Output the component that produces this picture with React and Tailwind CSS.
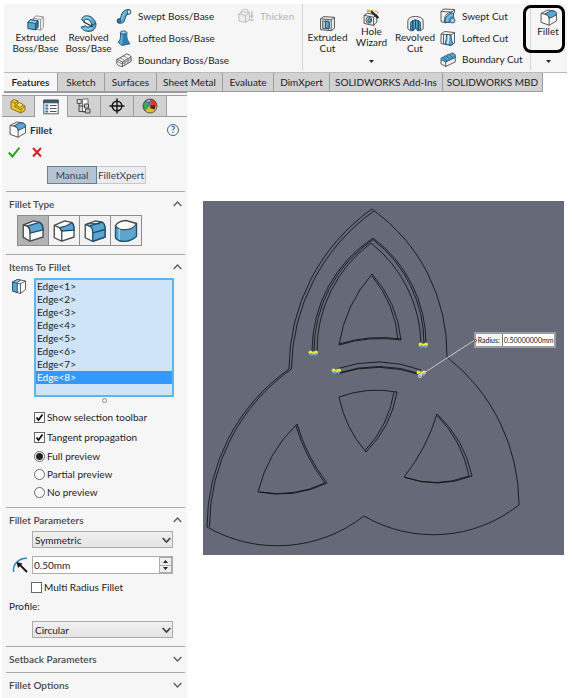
import { useState } from 'react';
import { cx } from 'class-variance-authority';

const INK = '#4a4d50';
const BLUE = '#5ba6cf';
const DEEP = '#2f7fae';
const PALE = '#9fd0ea';

function Icon({ size = 'h-4 w-4', children }) {
  return (
    <svg
      aria-hidden="true"
      className={cx('shrink-0', size)}
      fill="none"
      stroke={INK}
      strokeLinejoin="round"
      strokeWidth="0.9"
      viewBox="0 0 16 16"
    >
      {children}
    </svg>
  );
}

const ExtrudedBossIcon = () => (
  <Icon size="h-[17px] w-[17px]">
    <path d="M6 3 8.500 .8 15.300 1.800v10L12.800 14.200 6 13Z" fill="#f8f8f8" stroke="#8b8e91" />
    <path d="M12.800 4.200 15.300 1.800M12.800 4.200v10M6 3l6.800 1.200" stroke="#8b8e91" />
    <path d="M.8 6.800 3.200 4.500 10.300 5.500v6L8 14 .8 12.800Z" fill={BLUE} stroke="#1f4f70" />
    <path d="m.8 6.800 2.400-2.300 7.100 1L8 7.900Z" fill={PALE} stroke="#1f4f70" />
    <path d="m8 7.900 2.300-2.400v6L8 14Z" fill={DEEP} stroke="#1f4f70" />
  </Icon>
);

const RevolvedBossIcon = () => (
  <Icon size="h-[17px] w-[17px]">
    <path d="M1.500 4.500C2 1.500 5 0 8.500 1c3 .8 5.500 3.500 6.500 7l-4 1.500C10.500 6.500 8.500 4 6 4 4.500 4 3.800 5 4 6.500Z" fill={BLUE} stroke="#1f4f70" />
    <path d="M15 8c.3 3.500-1.500 6.500-5 7.300-3.500.7-7.500-.8-9-3.800l4-1.500c1.500 1.500 4 2 6-.5Z" fill={BLUE} stroke="#1f4f70" />
    <path d="M3 3.500c2-1.800 5-1.500 7.500.5M3 12.200c2 1.500 6 2 8.500-.5" stroke={PALE} strokeWidth="1.300" />
    <path d="M3.500 6.500 12 11" stroke="#202020" strokeWidth="1.100" />
  </Icon>
);

const SweptBossIcon = () => (
  <Icon>
    <path d="M3.500 13C9 14 5 4.500 12 3.800" stroke="#1f4f70" strokeLinecap="round" strokeWidth="5.500" />
    <path d="M3.500 13C9 14 5 4.500 12 3.800" stroke={BLUE} strokeLinecap="round" strokeWidth="4" />
    <path d="M5.500 11.500C7.500 9.500 6.500 4.500 11 3" stroke={PALE} />
    <ellipse cx="13" cy="4" fill="#d3e9f5" rx="1.800" ry="2.300" stroke="#1f4f70" />
    <circle cx="3" cy="12.800" fill={DEEP} r="1.700" stroke="#1f4f70" />
  </Icon>
);

const LoftedBossIcon = () => (
  <Icon>
    <path d="M4.500 2.500v4.200c0 2-1 4-2.300 5.600L6 15.500l8-1.700c-2-2.300-3.200-5-3.200-7.300v-4Z" fill={BLUE} stroke="#1f4f70" />
    <path d="M6 15.500c.8-3 1-6 1-11.500l3.800-.8c0 4 .6 7.500 3.200 10.600Z" fill={DEEP} stroke="none" />
    <ellipse cx="7.600" cy="2.500" fill={PALE} rx="3.200" ry="1.600" stroke="#1f4f70" />
  </Icon>
);

const BoundaryBossIcon = () => (
  <Icon>
    <path d="M.8 7.500 10.500 2c2 0 4 1.500 4.600 3v4.500L6.500 14.500C4 14.500 1 13 .8 11.500Z" fill="#f1f1f1" />
    <path d="M.8 7.500c1.500 0 3.700 1.500 5.700 2.500L15 5M6.500 10v4.500" />
    <path d="M4 6c1.500.3 3 1.500 5 2.500v4.700M7 4c1.500.3 3 1.200 5 2.700v4.500M1 9.500c1.500.3 3.500 2 5.500 2.500l8.600-4.800" stroke="#74777a" />
  </Icon>
);

const ThickenIcon = () => (
  <Icon>
    <g stroke="#b9bbbd">
      <path d="M.8 6 5 3.500l6.500 1.200V12l-4 2.500L.8 13Z" fill="#ededed" />
      <path d="m.8 6 6.700 1.500 4-2.800M7.500 7.500v7M3 5V3.200L6.500 1 10 2v2" />
      <path d="M13.800 3v6M12.500 7.500l1.300 2 1.300-2M12 12h3.500" strokeWidth="1.300" />
    </g>
  </Icon>
);

const ExtrudedCutIcon = () => (
  <Icon size="h-[17px] w-[17px]">
    <path d="M1.500 3.500 4.500 1.500l10 .7V12.500l-3 2.300-10-1Z" fill="#f3f3f3" />
    <path d="m1.500 3.500 10 1 3-2.300M11.500 4.500v10.300" />
    <path d="m3.500 5.500 6 .6v7l-6-.6Z" fill="#cfd4d8" />
    <path d="m6 5.800 3.500.3v7L6 12Z" fill={BLUE} stroke="#1f4f70" />
  </Icon>
);

const HoleWizardIcon = () => (
  <Icon size="h-[17px] w-[17px]">
    <path d="M1 6 4 4l9 1.500v7L10 15.500 1 13.600Z" fill="#f3f3f3" />
    <path d="M1 6l9 1.700 3-2.200M10 7.700v7.800" />
    <ellipse cx="5.500" cy="10.500" fill="#e9eef1" rx="2.700" ry="2.900" />
    <ellipse cx="6" cy="10.800" fill={BLUE} rx="1.500" ry="1.800" stroke="#1f4f70" />
    <path d="m7.500 2 7 6.500" stroke="#25282a" strokeWidth="2.200" />
    <path d="M6 .5v2M3.800 2.300h2M9.500.6 8.500 2M12 1l.2 1.500M14.500 3H13M4 .8l1 1" stroke="#e9a51f" strokeWidth="1.300" />
  </Icon>
);

const RevolvedCutIcon = () => (
  <Icon size="h-[17px] w-[17px]">
    <path d="M.8 5.500C.8 0 15.200 0 15.200 5.500V13l-2.700 2V9L10.500 6v8.500L8 12l-2.500 3V6L3.500 9v6L.8 13Z" fill="#f3f3f3" />
    <path d="m3.500 6.500 2-1.300V15l-2-1ZM5.500 5.200 8 4.500V12l-2.500 3Zm5 0L8 4.500V12l2.500 3Zm2 1.300-2-1.300V15l2-1Z" fill={BLUE} stroke="#1f4f70" />
  </Icon>
);

const SweptCutIcon = () => (
  <Icon>
    <path d="M1 3.500 3.500 1 14.500 1.500v3L6 15 1 13.500Z" fill="#f3f3f3" />
    <path d="M1 3.500 12 4l2.500-2.500M4.500 14.500C3.500 9 6 4.500 12 4" />
    <path d="M5 14.500C4.500 9.500 7.500 5 13.500 5v4.500c-2.500 0-3.500 2-3.500 5Z" fill={BLUE} stroke="#1f4f70" />
    <path d="M7 14C6.800 10 9 7 13 6.800" stroke={PALE} />
    <circle cx="12.500" cy="12.500" fill={PALE} r="2.500" stroke="#1f4f70" />
  </Icon>
);

const LoftedCutIcon = () => (
  <Icon>
    <path d="M1 4 4.500 1.500 14.500 2.500V13L11 15.500 1 13.500Z" fill="#f3f3f3" />
    <path d="m1 4 10 1 3.500-2.500M3.500 4.500V14" />
    <path d="M6.500 4.500 11 5c0 4 .8 6.500 2 8.500L11 15.300l-6-1.300c1-3 1.500-5.500 1.500-9.500Z" fill={BLUE} stroke="#1f4f70" />
    <path d="M8.500 5c0 4-.3 7-1 9" stroke="#e6f3fa" strokeWidth="1.500" />
  </Icon>
);

const BoundaryCutIcon = () => (
  <Icon>
    <path d="M1 8.500 11 3.500l4.200 2V11l-9.500 4.500L1 13Z" fill="#f3f3f3" />
    <path d="M1 8.500c0-2 1.500-3 2.500-1.500 0-2 2-3 3-1.500 0-2 2-3 3-1.500C10 1.500 14 1.500 15.200 4v2.500L5.700 11Z" fill={BLUE} stroke="#1f4f70" />
    <path d="M5.700 11v4.500M3.500 7l3.700 3M6.500 5.500l4 3M9.500 4l3.500 3" stroke="#1f4f70" />
  </Icon>
);

const FilletIcon = () => (
  <Icon size="h-[17px] w-[17px]">
    <path d="M1 4.200 7.500.9l6 1.200c1.300.5 2 1.600 2 3.200v5.900L8.500 15.300 1 12.500Z" fill="#fafafa" />
    <path d="M4.500 4.800 10.300 1.500l3.200.6c1.300.5 2 1.600 2 3.400L8.700 9C8.500 7 7 5.400 4.500 4.800Z" fill={BLUE} stroke="#1f4f70" />
    <path d="M1 4.200l3.500.6C7 5.400 8.500 7 8.700 9l-.2 6.300" />
  </Icon>
);

const ConstantFilletIcon = () => (
  <Icon size="h-6 w-6">
    <path d="M1.500 4 8.500 1.300l4 .9c1.500.8 2.200 2.500 2.200 5V12L6 14.800 1.500 12.300Z" fill="#fdfdfd" />
    <path d="M4 4.700 12.300 2.200c1.600.9 2.400 2.600 2.400 5L6 9.400C6 7 5.500 5.300 4 4.700Z" fill={BLUE} stroke="#1f4f70" />
    <path d="M1.500 4 4 4.700C5.500 5.300 6 7 6 9.400v5.400" />
  </Icon>
);

const VariableFilletIcon = () => (
  <Icon size="h-6 w-6">
    <path d="M1.500 4.300 8.500 1.300l4.500.9c1.200.8 1.700 2.500 1.700 5V12L6.500 14.800 1.500 12.500Z" fill="#fdfdfd" />
    <path d="M5 5.700C8 5.500 11 4.200 13.200 2.400c1 1 1.500 2.600 1.500 5L6.500 8Z" fill={BLUE} stroke="#1f4f70" />
    <path d="m1.500 4.300 3.500 1.400L6.500 8v6.800" />
  </Icon>
);

const FaceFilletIcon = () => (
  <Icon size="h-6 w-6">
    <path d="M1.500 3.800 8.500 1.200l4.200.9c1.400.8 2 2.300 2 4.500V12L6.500 14.900l-5-2.400Z" fill="#fdfdfd" />
    <path d="M4.300 4.700 12.500 2c1.500.8 2.200 2.300 2.200 4.600V12l-8.200 2.900V9C6.500 6.800 6 5.300 4.300 4.700Z" fill={BLUE} stroke="#1f4f70" />
    <path d="M6.500 9.300 14.700 7M1.500 3.800l2.800.9M2.800 3.300l8.500-.2" stroke="#1f4f70" />
  </Icon>
);

const FullRoundIcon = () => (
  <Icon size="h-6 w-6">
    <path d="M1 4.500v8c2.500 3.300 9.500 3.500 14-1V3Z" fill={BLUE} stroke="#1f4f70" />
    <path d="M1 4.500C2 2.500 5 1.200 8 1l7 2c-2.500 5-11.500 5.500-14 1.500Z" fill="#fdfdfd" />
    <path d="M3.500 6.500v7.300" stroke={PALE} />
  </Icon>
);

const EdgeIcon = () => (
  <Icon>
    <path d="M1.500 4 6.500 1.500l8 1.500v8.500l-5 4-8-2.500Z" fill="#f9f9f9" />
    <path d="M1.500 4l4.800 1.200V14.500L1.500 13Z" fill={BLUE} stroke="#1f4f70" />
    <path d="m1.500 4 5-2.500 3 .5-4 3Z" fill={PALE} stroke="#1f4f70" />
    <path d="m6.300 5.200 3.200.5 5-2.700M9.500 5.700v9.800" />
  </Icon>
);

const RadiusIcon = () => (
  <Icon>
    <path d="M1.500 15C.8 7 6 1.500 15 1.300" stroke="#2f86b8" strokeWidth="1.500" />
    <path d="m6.500 6.500 8.500 8.500" stroke="#161616" strokeWidth="1.800" />
    <path d="m4.500 5 6 1.500L6 11Z" fill="#161616" stroke="none" />
  </Icon>
);

const PartIcon = () => (
  <Icon>
    <g fill="#f2c92f" stroke="#8a6a10">
      <path d="M1 3.500 4 1.500l4 1.500v3l4 .5 3 1.500v4.500L11 15 1 10.500Z" />
      <path d="m1 3.500 4 1.700L8 3M5 5.200V9l6 2.500 4-3.500M11 11.500V15M8 6 5 9" fill="none" />
      <path d="m7 6 2.500-1.500L12.500 6v2l-2.200 1.200L7 8Z" fill="#fbe06a" />
    </g>
  </Icon>
);

const PropertyIcon = () => (
  <Icon>
    <path d="M.8 1.200h14.400v13.600H.8Z" fill="#fff" stroke="#3d4a52" />
    <path d="M.8 1.200h14.400v2.600H.8Z" fill="#2c5d7c" stroke="#3d4a52" />
    <path d="M2.300 6.500h3M2.300 9.500h3M2.300 12.500h3" stroke={DEEP} strokeWidth="1.900" />
    <path d="M7 6.500h6.500M7 9.500h6.500M7 12.500h6.500" stroke="#555" strokeWidth="1.200" />
  </Icon>
);

const ConfigurationIcon = () => (
  <Icon>
    <g stroke="#3d3f41">
      <path d="M6.500 1H12v13H6.500Z" fill="#f4f4f4" stroke="#666" />
      <path d="M3 5v8.500h6M3 8h6" />
      <path d="M1.200 1.500h4v4h-4Z" fill="#ddd" />
      <path d="M8.500 6h4v4h-4ZM9.500 11h4.500v4H9.500Z" fill="#c8c8c8" />
    </g>
  </Icon>
);

const TargetIcon = () => (
  <Icon>
    <g stroke="#111" strokeWidth="1.400">
      <circle cx="8" cy="8" r="4.800" />
      <path d="M8 .5v15M.5 8h15" />
    </g>
  </Icon>
);

const AppearanceIcon = () => (
  <Icon>
    <circle cx="8" cy="8" fill="#e8b73a" r="7" stroke="none" />
    <path d="M8 8 2.500 3.700A7 7 0 0 1 9 1.100Z" fill="#3476c8" stroke="none" />
    <path d="M8 8 2.500 3.700A7 7 0 0 0 3 13Z" fill="#3fa45a" stroke="none" />
    <path d="M9 1.100A7 7 0 0 1 15 8.500L8 8Z" fill="#d93a2c" stroke="none" />
    <path d="M8.500 7.500h4.500v3.800l-4.500-.7Z" fill="#2b2b2b" stroke="none" />
    <path d="M5 3.500c1-.8 2-1 3-1" stroke="#fff" />
    <circle cx="8" cy="8" r="7" stroke="#5b4a35" />
  </Icon>
);

const Caret = ({ className = '' }) => (
  <svg aria-hidden="true" className={cx('block h-[3px] w-[5px]', className)} viewBox="0 0 5 3">
    <path d="M0 0h5L2.500 3Z" fill="#222" />
  </svg>
);

const Chevron = ({ up = false, strong = false }) => (
  <svg
    aria-hidden="true"
    className="h-[6px] w-[9px] shrink-0"
    fill="none"
    stroke={strong ? '#444' : '#5a5a5a'}
    strokeWidth={strong ? 1.8 : 1.3}
    viewBox="0 0 9 6"
  >
    <path d={up ? 'M.7 5 4.500 1 8.300 5' : 'M.7 1 4.500 5 8.300 1'} />
  </svg>
);

function ToolButton({ icon, lines, width, menu = false, raised = false, children }) {
  return (
    <button
      className={cx('relative flex shrink-0 flex-col items-center', width, raised ? 'pt-[5px]' : 'pt-[11px]')}
      type="button"
    >
      {icon}
      <span className="text-center leading-[11px]">
        {lines.map((line) => (
          <span className="block whitespace-nowrap" key={line}>
            {line}
          </span>
        ))}
      </span>
      {menu ? (
        <span className="mt-auto pb-[9px]">
          <Caret />
        </span>
      ) : null}
      {children}
    </button>
  );
}

function ToolRow({ icon, label, disabled = false }) {
  return (
    <button
      className="flex h-[22px] items-center gap-[6px] whitespace-nowrap disabled:text-[#b4b4b4]"
      disabled={disabled}
      type="button"
    >
      {icon}
      {label}
    </button>
  );
}

function Ribbon() {
  return (
    <div className="flex h-[69px] border-b border-[#b9bcbe] bg-[#f6f6f7] pl-[5px]">
      <ToolButton icon={<ExtrudedBossIcon />} lines={['Extruded', 'Boss/Base']} width="w-[53px]" />
      <ToolButton icon={<RevolvedBossIcon />} lines={['Revolved', 'Boss/Base']} width="w-[53px]" />
      <div className="flex w-[122px] shrink-0 flex-col pt-px pl-px">
        <ToolRow icon={<SweptBossIcon />} label="Swept Boss/Base" />
        <ToolRow icon={<LoftedBossIcon />} label="Lofted Boss/Base" />
        <ToolRow icon={<BoundaryBossIcon />} label="Boundary Boss/Base" />
      </div>
      <div className="mb-[2px] w-[66px] shrink-0 border-r border-[#d5d5d5] pt-px pl-px">
        <ToolRow disabled icon={<ThickenIcon />} label="Thicken" />
      </div>
      <ToolButton icon={<ExtrudedCutIcon />} lines={['Extruded', 'Cut']} width="w-[49px]" />
      <ToolButton icon={<HoleWizardIcon />} lines={['Hole', 'Wizard']} menu raised width="w-[39px]" />
      <ToolButton icon={<RevolvedCutIcon />} lines={['Revolved', 'Cut']} width="w-[48px]" />
      <div className="mb-[2px] flex w-[92px] shrink-0 flex-col border-r border-[#d5d5d5] pt-px pl-px">
        <ToolRow icon={<SweptCutIcon />} label="Swept Cut" />
        <ToolRow icon={<LoftedCutIcon />} label="Lofted Cut" />
        <ToolRow icon={<BoundaryCutIcon />} label="Boundary Cut" />
      </div>
      <ToolButton icon={<FilletIcon />} lines={['Fillet']} menu raised width="w-[34px]">
        <span className="pointer-events-none absolute top-px -left-2 h-[48px] w-[42px] rounded-lg border-3 border-black" />
      </ToolButton>
    </div>
  );
}

const ribbonTabs = [
  ['Features', 'w-[54px]'],
  ['Sketch', 'w-[47px]'],
  ['Surfaces', 'w-[52px]'],
  ['Sheet Metal', 'w-[66px]'],
  ['Evaluate', 'w-[51px]'],
  ['DimXpert', 'w-[56px]'],
  ['SOLIDWORKS Add-Ins', 'w-[113px]'],
  ['SOLIDWORKS MBD', 'w-[100px]'],
];

function RibbonTabs() {
  const [active, setActive] = useState('Features');

  return (
    <div className="flex h-[19px]" role="tablist">
      {ribbonTabs.map(([tab, width]) => (
        <button
          aria-selected={tab === active}
          className={cx(
            'shrink-0 border-r border-b border-[#9a9c9e] whitespace-nowrap',
            width,
            tab === active ? 'bg-[#f6f6f7] font-semibold' : 'bg-[#d2d2d3]'
          )}
          key={tab}
          onClick={() => setActive(tab)}
          role="tab"
          type="button"
        >
          {tab}
        </button>
      ))}
    </div>
  );
}

const managerTabs = [
  ['Feature tree', PartIcon],
  ['Property manager', PropertyIcon],
  ['Configurations', ConfigurationIcon],
  ['Dimensions', TargetIcon],
  ['Appearances', AppearanceIcon],
];

const filletTypes = [
  ['Constant size', ConstantFilletIcon],
  ['Variable size', VariableFilletIcon],
  ['Face', FaceFilletIcon],
  ['Full round', FullRoundIcon],
];

const edges = [1, 2, 3, 4, 5, 6, 7, 8].map((n) => `Edge<${n}>`);

function Section({ title, open = false, className = '', children }) {
  return (
    <section className={cx('mr-[2px] ml-1 border-t border-[#a9a9a9]', className)}>
      <button
        aria-expanded={open}
        className="flex h-[23px] w-full items-center justify-between px-[3px] font-semibold text-[#484a4c]"
        type="button"
      >
        {title}
        <Chevron up={open} />
      </button>
      {children}
    </section>
  );
}

function Check({ label, defaultChecked = false }) {
  return (
    <label className="flex h-5 items-center gap-[2px]">
      <span className="relative h-[11px] w-[11px]">
        <input
          className="peer block h-[11px] w-[11px] appearance-none border border-[#666] bg-white"
          defaultChecked={defaultChecked}
          type="checkbox"
        />
        <svg
          aria-hidden="true"
          className="pointer-events-none absolute inset-0 hidden peer-checked:block"
          fill="none"
          stroke="#111"
          strokeWidth="1.800"
          viewBox="0 0 11 11"
        >
          <path d="m2.500 5.500 2 2.500 4-5.500" />
        </svg>
      </span>
      {label}
    </label>
  );
}

function PreviewRadio({ label, defaultChecked = false }) {
  return (
    <label className="flex h-[18px] items-center gap-[2px]">
      <input
        className="h-[11px] w-[11px] appearance-none rounded-full border border-[#666] bg-white checked:bg-[radial-gradient(circle,#222_0_3px,#fff_4px)]"
        defaultChecked={defaultChecked}
        name="preview"
        type="radio"
      />
      {label}
    </label>
  );
}

function Dropdown({ label, value }) {
  return (
    <div className="relative mr-[12px] ml-[26px]">
      <select
        aria-label={label}
        className="block h-[17px] w-full appearance-none border border-[#acacac] bg-linear-to-b from-[#f0f0f0] to-[#e4e4e4] pl-[2px]"
        defaultValue={value}
      >
        <option>{value}</option>
      </select>
      <span className="pointer-events-none absolute inset-y-0 right-[2px] flex items-center">
        <Chevron strong />
      </span>
    </div>
  );
}

function PropertyManager() {
  const [type, setType] = useState('Constant size');
  const [edge, setEdge] = useState('Edge<8>');

  return (
    <aside className="ml-[2px] w-[185px] shrink-0 bg-[#f6f6f6] pb-[2px]">
      <div className="ml-[2px] h-[3px] border-t border-[#8d9ba1]" />
      <div className="flex h-[22px] border-y border-[#9a9c9e]">
        {managerTabs.map(([name, TabIcon]) => (
          <button
            aria-label={name}
            className={cx(
              'flex w-[33px] items-center justify-center border-r border-[#9a9c9e]',
              name === 'Property manager' ? '-mb-px bg-[#f6f6f6]' : 'bg-[#d2d2d3]'
            )}
            key={name}
            type="button"
          >
            <TabIcon />
          </button>
        ))}
      </div>

      <div className="mt-[4px] flex items-center pr-2 pl-[7px]">
        <FilletIcon />
        <h1 className="ml-1 font-bold text-[#1f2f48]">Fillet</h1>
        <button
          aria-label="Help"
          className="ml-auto flex h-3 w-3 items-center justify-center rounded-full border border-[#3c6584] text-[9px] leading-none font-bold text-[#22608c]"
          type="button"
        >
          ?
        </button>
      </div>

      <div className="mt-[8px] flex gap-3 pl-[6px]">
        <button aria-label="Accept" type="button">
          <svg className="h-3 w-3" fill="none" stroke="#2a9d1c" strokeWidth="2" viewBox="0 0 12 12">
            <path d="m.8 6.500 3.500 4L11.500 1.500" />
          </svg>
        </button>
        <button aria-label="Cancel" type="button">
          <svg className="h-3 w-3" fill="none" stroke="#d42020" strokeWidth="2" viewBox="0 0 12 12">
            <path d="m1 2 8 8.500M9 2l-8 8.500" />
          </svg>
        </button>
      </div>

      <div className="mt-[8px] flex h-[18px] pl-[45px] text-[#3b4148]">
        <button className="w-[50px] border border-[#6d7f92] bg-[#b5c3d5]" type="button">
          Manual
        </button>
        <button className="w-[49px] border border-l-0 border-[#c4c8d0] bg-[#ebecf2]" type="button">
          FilletXpert
        </button>
      </div>

      <Section className="mt-[7px] pb-[8px]" open title="Fillet Type">
        <div className="flex pl-[11px]">
          {filletTypes.map(([name, TypeIcon]) => (
            <button
              aria-label={name}
              aria-pressed={name === type}
              className={cx(
                '-mr-px flex h-[31px] w-8 items-center justify-center border border-[#8c8c8c]',
                name === type ? 'bg-[#b3b3b3]' : 'bg-[#f2f2f2]'
              )}
              key={name}
              onClick={() => setType(name)}
              type="button"
            >
              <TypeIcon />
            </button>
          ))}
        </div>
      </Section>

      <Section className="pb-[6px]" open title="Items To Fillet">
        <div className="flex items-start gap-[7px] pr-[11px] pl-[5px]">
          <EdgeIcon />
          <div
            aria-label="Edges to fillet"
            className="flex h-[119px] flex-1 flex-col border-2 border-[#5fb5ea] bg-[#cfe4f7]"
            role="listbox"
          >
            {edges.map((name) => (
              <button
                aria-selected={name === edge}
                className={cx(
                  'h-[13px] pl-px text-left leading-[13px]',
                  name === edge && 'bg-[#3399fe] text-white'
                )}
                key={name}
                onClick={() => setEdge(name)}
                role="option"
                type="button"
              >
                {name}
              </button>
            ))}
          </div>
        </div>
        <div className="mt-px ml-[96px] h-[5px] w-[5px] rounded-full border border-[#8b8b8b]" />
        <div className="mt-1 pl-[28px]">
          <Check defaultChecked label="Show selection toolbar" />
          <Check defaultChecked label="Tangent propagation" />
          <PreviewRadio defaultChecked label="Full preview" />
          <PreviewRadio label="Partial preview" />
          <PreviewRadio label="No preview" />
        </div>
      </Section>

      <Section className="pb-[8px]" open title="Fillet Parameters">
        <Dropdown label="Fillet method" value="Symmetric" />
        <div className="mt-[8px] flex items-center gap-1 pr-[12px] pl-[6px]">
          <RadiusIcon />
          <div className="flex h-[18px] min-w-0 flex-1 border border-[#acacac] bg-white">
            <input
              aria-label="Radius"
              className="min-w-0 flex-1 pl-px"
              defaultValue="0.50mm"
            />
            <div className="flex w-[13px] flex-col">
              <button
                aria-label="Increase"
                className="flex flex-1 items-center justify-center border border-[#acacac] bg-[#eee]"
                type="button"
              >
                <Caret className="rotate-180" />
              </button>
              <button
                aria-label="Decrease"
                className="flex flex-1 items-center justify-center border border-t-0 border-[#acacac] bg-[#eee]"
                type="button"
              >
                <Caret />
              </button>
            </div>
          </div>
        </div>
        <div className="mt-[3px] pl-[25px]">
          <Check label="Multi Radius Fillet" />
        </div>
        <p className="mt-[2px] mb-[8px] pl-[3px] leading-[14px]">Profile:</p>
        <Dropdown label="Profile" value="Circular" />
      </Section>

      <Section className="pb-[2px]" title="Setback Parameters" />
      <Section title="Fillet Options" />
    </aside>
  );
}

const outline = [
  'M169 8A196 196 0 0 0 86 168A193 193 0 0 0 4 326A141 141 0 0 0 161 315A138 138 0 0 0 316 304A188 188 0 0 0 244 156A178 178 0 0 0 169 8',
  'M171 10A196 196 0 0 0 88.500 168A193 193 0 0 0 6.500 326',
];

const bands = [
  'M109 150A135 135 0 0 1 170 37A132 132 0 0 1 223 143',
  'M111 150A135 135 0 0 1 170 38.500A132 132 0 0 1 221 143',
  'M114 150A134 134 0 0 1 168 42A132 132 0 0 1 218 143',
  'M135 167.500A125 125 0 0 1 218 169',
  'M134 173A130 130 0 0 1 218 174M135 172A130 130 0 0 1 218 173',
];

const pockets = [
  'M169 73A141 141 0 0 0 136 144A140 140 0 0 1 198 139A115 115 0 0 0 169 73',
  'M169 75A115 115 0 0 1 195 138.500M136 143A140 140 0 0 1 198 138',
  'M136 196A110 110 0 0 1 194 191A110 110 0 0 1 163 251A119 119 0 0 1 136 196',
  'M191 191A110 110 0 0 1 162 249.500',
  'M94 223A140 140 0 0 0 55 291A110 110 0 0 0 124 282A180 180 0 0 1 94 223',
  'M93 225A180 180 0 0 0 122 282A110 110 0 0 1 57 291',
  'M234 213A185 185 0 0 1 201 276A95 95 0 0 0 269 275A117 117 0 0 0 234 213',
  'M234 214.500A117 117 0 0 1 266 275A95 95 0 0 1 202 276.500',
];

// Handles at both ends of every selected edge
const handles = [
  [110, 152],
  [220, 144],
  [133, 170],
  [218, 172],
];

function GraphicsArea() {
  return (
    <main className="relative mt-[109px] mr-[3px] ml-4 min-w-0 flex-1 self-start">
      <svg
        aria-label="Part model with fillet preview"
        className="block w-full bg-[#656978]"
        fill="none"
        role="img"
        viewBox="0 0 361 354"
      >
        <g stroke="#15161a" strokeLinejoin="round" strokeWidth="0.9">
          {[...outline, ...bands, ...pockets].map((d) => (
            <path d={d} key={d} />
          ))}
        </g>
        {handles.map(([x, y]) => (
          <g key={`${x}-${y}`}>
            <circle cx={x - 2.5} cy={y - 0.5} fill="#f7e63a" r="1.900" />
            <circle cx={x + 3} cy={y - 0.5} fill="#f7e63a" r="1.900" />
            <circle cx={x - 1.5} cy={y + 1.5} fill="#4da3ea" r="1.500" />
            <circle cx={x + 2.5} cy={y + 1.5} fill="#4da3ea" r="1.500" />
            <circle cx={x + 0.5} cy={y} fill="#f7e63a" r="1.400" />
          </g>
        ))}
        <path d="M217 174.500 271 139.500" stroke="#c9cac2" />
        <circle cx="217" cy="175" r="1.500" stroke="#dedfd5" />
      </svg>
      <label className="absolute top-[37%] left-[75%] flex h-4 w-[82px] items-center border-2 border-[#9b9d9f] bg-[#f4f4f4] text-[7px] leading-3 text-[#222]">
        <span className="w-[26px] text-center">Radius:</span>
        <input
          className="h-3 min-w-0 flex-1 border-l border-[#777] bg-white pl-px"
          defaultValue="0.50000000mm"
        />
      </label>
      <span className="absolute top-[39%] left-[75%] h-[3px] w-[3px] rounded-full border border-[#333] bg-white" />
    </main>
  );
}

export default function App() {
  return (
    <div className="min-h-screen bg-white pt-1 font-['Lato','Open_Sans',sans-serif] text-[10px] leading-[14px] text-[#1c1c1e]">
      <header className="mr-[5px] ml-1">
        <Ribbon />
        <RibbonTabs />
      </header>
      <div className="flex pr-[5px]">
        <PropertyManager />
        <GraphicsArea />
      </div>
    </div>
  );
}
